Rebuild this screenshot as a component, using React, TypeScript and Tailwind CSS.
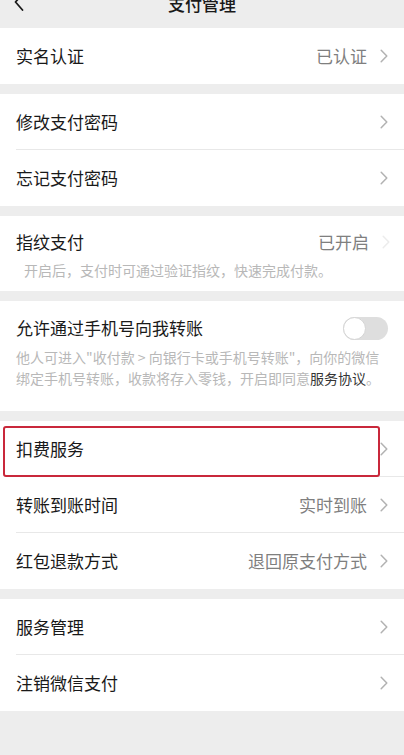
import React from "react";

const Chevron = ({ color = "#b2b2b2" }: { color?: string }) => (
  <svg width="8" height="14" viewBox="0 0 8 14" className="shrink-0">
    <path d="M1.2 1.2L6.8 7L1.2 12.8" fill="none" stroke={color} strokeWidth="1.5" strokeLinecap="round" strokeLinejoin="round" />
  </svg>
);

const Row = ({
  title,
  value,
  sep = false,
  chevronColor,
}: {
  title: string;
  value?: string;
  sep?: boolean;
  chevronColor?: string;
}) => (
  <div className="relative h-[56px] flex items-center pl-4 pr-[16px]">
    <div className="flex-1 text-[17px] text-[#191919] leading-6">{title}</div>
    {value && <div className="text-[17px] text-[#7f7f7f] leading-6 mr-[13px]">{value}</div>}
    <Chevron color={chevronColor} />
    {sep && <div className="absolute left-4 right-0 bottom-0 h-px bg-[#e8e8e8]" />}
  </div>
);

export default function App() {
  return (
    <div className="w-[404px] h-[755px] bg-[#ededed] overflow-hidden font-['Noto_Sans_CJK_SC',sans-serif]">
      {/* header */}
      <div className="relative h-[28px] flex justify-center overflow-hidden">
        <svg width="12" height="20" viewBox="0 0 12 20" className="absolute left-[13px] top-[-8px]">
          <path d="M9.5 2L2.5 10L9.5 18" fill="none" stroke="#191919" strokeWidth="1.8" strokeLinecap="round" strokeLinejoin="round" />
        </svg>
        <div className="text-[17px] font-medium text-[#191919] leading-none mt-[-5px]">支付管理</div>
      </div>

      <div className="flex flex-col gap-[10px]">
        <div className="bg-white">
          <Row title="实名认证" value="已认证" />
        </div>

        <div className="bg-white">
          <Row title="修改支付密码" sep />
          <Row title="忘记支付密码" />
        </div>

        <div className="bg-white pt-[14px] pb-[10px]">
          <div className="flex items-center pl-4 pr-[14px]">
            <div className="flex-1 text-[17px] text-[#191919] leading-6">指纹支付</div>
            <div className="text-[17px] text-[#7f7f7f] leading-6 mr-[13px]">已开启</div>
            <Chevron color="#ececec" />
          </div>
          <div className="pl-6 mt-[6px] text-[14px] leading-[21px] text-[#b8b8b8] whitespace-nowrap">
            开启后，支付时可通过验证指纹，快速完成付款。
          </div>
        </div>

        <div className="bg-white pt-[15px] pb-[22px]">
          <div className="flex items-center pl-4 pr-[16px]">
            <div className="flex-1 text-[17px] text-[#191919] leading-6">允许通过手机号向我转账</div>
            <div className="relative w-[45px] h-[23px] rounded-full bg-[#dedede]">
              <div className="absolute left-0 top-0 w-[23px] h-[23px] rounded-full bg-white border border-[#d4d4d4]" />
            </div>
          </div>
          <div className="pl-4 mt-[7px] text-[14px] leading-[21px] text-[#b8b8b8] whitespace-nowrap">
            他人可进入"收付款 &gt; 向银行卡或手机号转账"，向你的微信
            <br />
            绑定手机号转账，收款将存入零钱，开启即同意<span className="text-[#353535]">服务协议</span>。
          </div>
        </div>

        <div className="bg-white">
          <div className="relative">
            <Row title="扣费服务" sep />
            <div className="absolute left-[3px] top-[5px] w-[377px] h-[51px] border-2 border-[#c9283b] rounded-[3px]" />
          </div>
          <Row title="转账到账时间" value="实时到账" sep />
          <Row title="红包退款方式" value="退回原支付方式" />
        </div>

        <div className="bg-white">
          <Row title="服务管理" sep />
          <Row title="注销微信支付" />
        </div>
      </div>
    </div>
  );
}
